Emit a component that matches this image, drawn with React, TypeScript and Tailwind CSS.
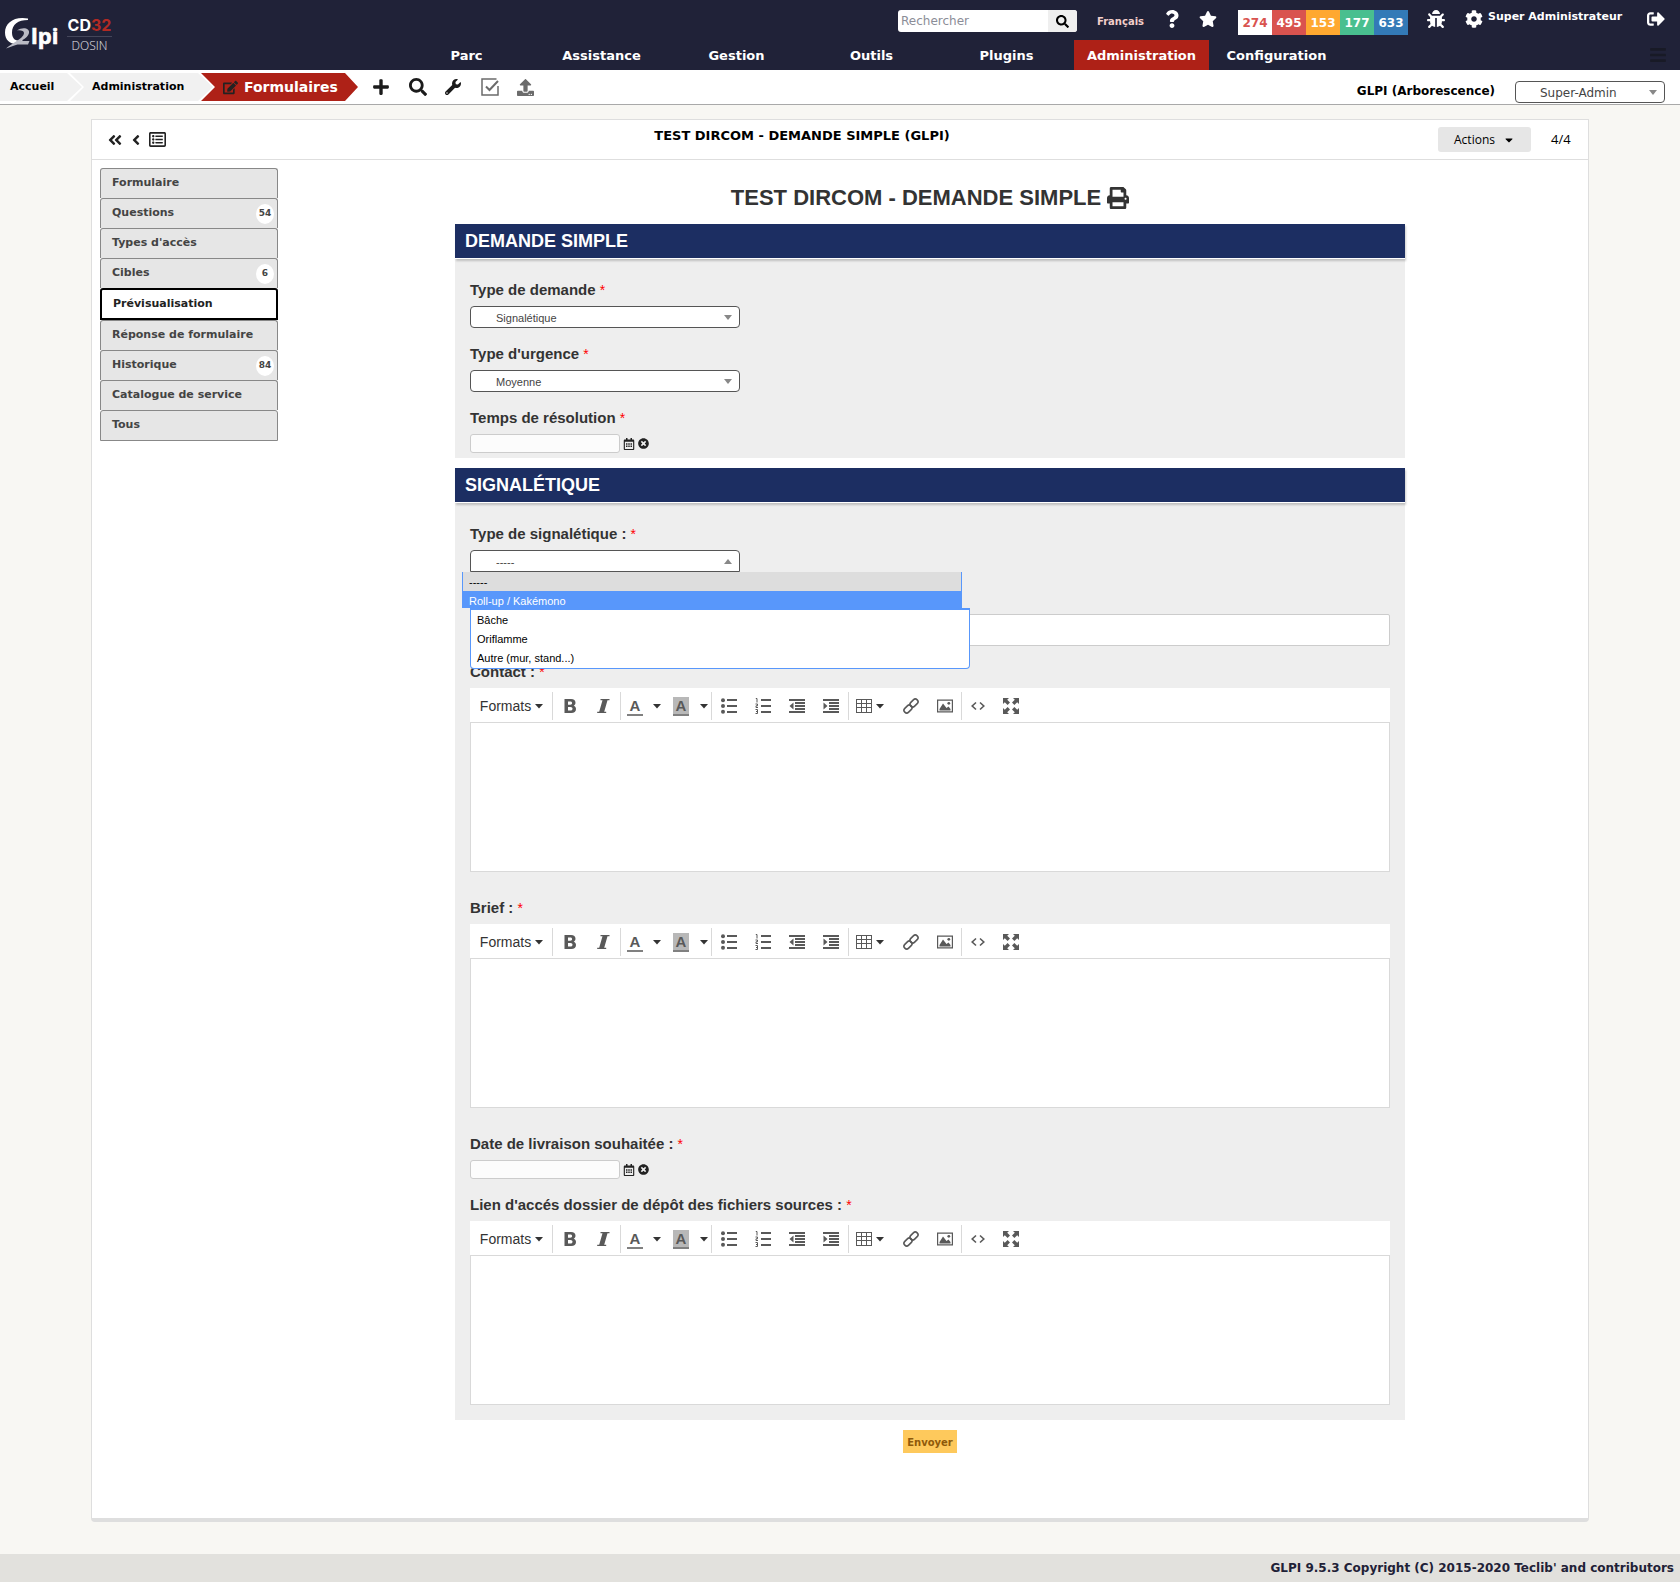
import React from "react";
import {
  FaAngleDoubleLeft,
  FaAngleLeft,
  FaBars,
  FaBug,
  FaCaretDown,
  FaCog,
  FaEdit,
  FaPlus,
  FaPrint,
  FaQuestion,
  FaRegCalendarAlt,
  FaRegListAlt,
  FaSearch,
  FaSignOutAlt,
  FaStar,
  FaTimesCircle,
  FaUpload,
  FaWrench,
} from "react-icons/fa";

const menu = ["Parc", "Assistance", "Gestion", "Outils", "Plugins", "Administration", "Configuration"];

const counters = [
  { value: 274, style: "bg-white text-[#d9534f]" },
  { value: 495, style: "bg-[#d9534f] text-white" },
  { value: 153, style: "bg-[#ffa830] text-white" },
  { value: 177, style: "bg-[#49bf8f] text-white" },
  { value: 633, style: "bg-[#337ab7] text-white" },
];

const tabs: { label: string; count?: number }[] = [
  { label: "Formulaire" },
  { label: "Questions", count: 54 },
  { label: "Types d'accès" },
  { label: "Cibles", count: 6 },
  { label: "Prévisualisation" },
  { label: "Réponse de formulaire" },
  { label: "Historique", count: 84 },
  { label: "Catalogue de service" },
  { label: "Tous" },
];

function Logo() {
  return (
    <a href="#" aria-label="Glpi CD32 DOSIN" className="flex w-[399px] shrink-0 items-start pt-[16px] pl-[4px] text-white">
      <svg width="56" height="36" viewBox="0 0 56 36" className="mr-[7px]">
        <path d="M24 2.500C10 0 1 7 1 16.500 1 24 6 28 12 28c3 0 5-.8 7-2.500l-1-1.500c-6 2-10-1-10-7.500C8 8.500 14 4 24 4z" fill="#fff" />
        <path d="M13 14.500c6-4 13-2 12 2.500-.7 3.500-5 6.500-8 8h8.500l-1.500 3.500H13.500C9 30 6 31 2 32.500c3-3 7-5 10-7 4-2.500 8-5.500 8-8.500 0-2-3-3-7-2.500z" fill="#b9bac4" />
        <text x="27" y="28" fill="#fff" stroke="#fff" strokeWidth="0.600" fontFamily="Open Sans, sans-serif" fontWeight="700" fontSize="22">
          lpi
        </text>
      </svg>
      <span className="flex w-[45px] flex-col items-center pt-px">
        <span className="font-['Inter'] text-[16px] leading-[16px] font-bold">
          CD<span className="text-[#b22a24]">32</span>
        </span>
        <span className="mt-[3px] h-px w-full bg-[#44465a]" />
        <span className="font-['Open_Sans'] text-[12px] leading-[18px] font-light text-[#e4e5ea]">DOSIN</span>
      </span>
    </a>
  );
}

function Header() {
  return (
    <header className="flex h-[70px] bg-[#202238] font-bold text-white">
      <Logo />
      <div className="flex min-w-0 flex-1 flex-col">
        <div className="flex h-10 items-start justify-end pr-[15px]">
          <form className="mt-[10px] flex h-[22px] w-[179px] overflow-hidden rounded-[3px] bg-white">
            <input
              type="text"
              aria-label="Rechercher"
              placeholder="Rechercher"
              className="min-w-0 flex-1 px-[3px] text-[12px] font-normal text-black placeholder:text-[#8b8d97]"
            />
            <button type="button" aria-label="Lancer la recherche" className="flex w-[29px] items-center justify-center bg-[#efefef] text-black">
              <FaSearch size={13} />
            </button>
          </form>
          <a href="#" className="mt-[14px] ml-[20px] w-[49px] text-[10px] leading-[15px] text-[#f3cfca]">
            Français
          </a>
          <a href="#" aria-label="Aide" className="mt-[10px] ml-[17px]">
            <FaQuestion size={18} />
          </a>
          <a href="#" aria-label="Favoris" className="mt-[10px] ml-[18px]">
            <FaStar size={18} />
          </a>
          <div className="mt-[10px] ml-[21px] flex h-[25px] text-[12px]">
            {counters.map((c) => (
              <a key={c.value} href="#" className={"flex w-[34px] items-center justify-center " + c.style}>
                {c.value}
              </a>
            ))}
          </div>
          <button type="button" aria-label="Débogage" className="mt-[10px] ml-[19px]">
            <FaBug size={18} />
          </button>
          <a href="#" className="ml-[20px] flex">
            <FaCog size={18} className="mt-[10px]" />
            <span className="mt-[10px] ml-[5px] w-[141px] text-[11px] leading-[14px] whitespace-nowrap">Super Administrateur</span>
          </a>
          <a href="#" aria-label="Déconnexion" className="mt-[10px] ml-[18px]">
            <FaSignOutAlt size={18} />
          </a>
        </div>
        <nav className="flex h-[30px] text-[13px]">
          {menu.map((m) => (
            <a
              key={m}
              href="#"
              className={"flex w-[135px] items-center justify-center pt-[2px] " + (m === "Administration" ? "bg-[#ae2117]" : "")}
            >
              {m}
            </a>
          ))}
          <button type="button" aria-label="Menu" className="mr-[13px] ml-auto text-[#181a26]">
            <FaBars size={18} />
          </button>
        </nav>
      </div>
    </header>
  );
}

function CheckSquare() {
  return (
    <svg width="18" height="18" viewBox="0 0 18 18" fill="none" stroke="#6b6b6b" strokeWidth="1.500">
      <path d="M15.500 1H1v16h16V8" />
      <path d="M5 8.500 8.500 12 17 3" strokeWidth="2" />
    </svg>
  );
}

function BreadcrumbBar() {
  return (
    <div className="flex h-[35px] items-center border-b border-[#a9a9a9] bg-white text-black">
      <nav aria-label="Fil d'Ariane" className="flex h-[28px] text-[11px] font-bold">
        <a href="#" className="flex w-[82px] items-center bg-[#f1f1f1] pl-[10px] [clip-path:polygon(0_0,67px_0,100%_50%,67px_100%,0_100%)]">
          Accueil
        </a>
        <a
          href="#"
          className="-ml-[12px] flex w-[143px] items-center bg-[#f1f1f1] pl-[22px] [clip-path:polygon(0_0,128px_0,100%_50%,128px_100%,0_100%,14px_50%)]"
        >
          Administration
        </a>
        <a
          href="#"
          className="-ml-[12px] flex w-[157px] items-center bg-[#ae2117] pl-[22px] text-[14px] text-white [clip-path:polygon(0_0,144px_0,100%_50%,144px_100%,0_100%,14px_50%)]"
        >
          <FaEdit size={15} className="mr-[6px] text-[#222]" />
          Formulaires
        </a>
      </nav>
      <div className="flex items-center text-[#1b1b1b]">
        <button type="button" aria-label="Ajouter" className="ml-[14px]">
          <FaPlus size={18} />
        </button>
        <button type="button" aria-label="Rechercher" className="ml-[19px]">
          <FaSearch size={18} />
        </button>
        <button type="button" aria-label="Configurer" className="ml-[18px]">
          <FaWrench size={16} />
        </button>
        <button type="button" aria-label="Sélection" className="ml-[20px]">
          <CheckSquare />
        </button>
        <button type="button" aria-label="Importer" className="ml-[18px] text-[#6b6b6b]">
          <FaUpload size={17} />
        </button>
      </div>
      <a href="#" className="mt-[8px] mr-[20px] ml-auto text-[12px] font-bold">
        GLPI (Arborescence)
      </a>
      <div className="relative mt-[9px] mr-[15px] h-[22px] w-[150px]">
        <select
          aria-label="Profil"
          className="block h-full w-full appearance-none rounded-[4px] border border-[#555] bg-white pt-[2px] pl-[24px] text-[12px] leading-[18px] text-[#444]"
        >
          <option>Super-Admin</option>
        </select>
        <Caret />
      </div>
    </div>
  );
}

function Caret({ up = false }: { up?: boolean }) {
  return (
    <svg width="8" height="5" viewBox="0 0 8 5" fill="#888" className="pointer-events-none absolute top-[9px] right-[8px]">
      <path d={up ? "M0 5h8L4 0z" : "M0 0h8L4 5z"} />
    </svg>
  );
}

function Sidebar() {
  return (
    <ul className="mt-[8px] ml-[8px] w-[178px] shrink-0 text-[11px] font-bold">
      {tabs.map((t, i) => {
        const active = t.label === "Prévisualisation";
        const last = i === tabs.length - 1;
        return (
          <li key={t.label}>
            <a
              href="#"
              className={
                "flex rounded-t-[3px] pt-[5px] pl-[11px] leading-[17px] " +
                (active
                  ? "h-[32px] border-2 border-black bg-white text-[#222]"
                  : "border border-[#888] bg-[#e6e6e6] text-[#444] " + (last ? "h-[31px]" : "h-[30px] border-b-0"))
              }
            >
              {t.label}
              {t.count !== undefined && (
                <span className="mr-[3px] ml-auto flex h-[20px] w-[18px] items-center justify-center rounded-[50%] bg-white pb-[2px] text-[9px]">
                  {t.count}
                </span>
              )}
            </a>
          </li>
        );
      })}
    </ul>
  );
}

function Question({
  label,
  htmlFor,
  className = "mb-4",
  children,
}: {
  label?: string;
  htmlFor: string;
  className?: string;
  children: React.ReactNode;
}) {
  return (
    <div className={className}>
      <label htmlFor={htmlFor} className="mb-[6px] block h-[20px] text-[15px] leading-[20px] font-bold text-[#333]">
        {label && (
          <>
            {label} <span className="text-[14px] font-normal text-[#f00]">*</span>
          </>
        )}
      </label>
      {children}
    </div>
  );
}

function Dropdown({ id, value, open = false }: { id: string; value: string; open?: boolean }) {
  return (
    <div className="relative h-[22px] w-[270px]">
      <select
        id={id}
        className={
          "block h-full w-full appearance-none border border-[#555] bg-white pt-[2px] pl-[25px] text-[11px] leading-[18px] text-[#444] " +
          (open ? "rounded-t-[4px]" : "rounded-[4px]")
        }
      >
        <option>{value}</option>
      </select>
      <Caret up={open} />
      {open && (
        <ul
          role="listbox"
          aria-label="Type de signalétique"
          className="absolute top-full -left-[8px] z-10 w-[508px] text-[11px] leading-[19px] text-black"
        >
          <li role="option" className="mr-[8px] h-[19px] border-x border-[#5897fb] bg-[#ddd] pt-px pl-[6px]">
            -----
          </li>
          <li role="option" aria-selected="true" className="mr-[8px] h-[17px] bg-[#5897fb] pt-px pl-[7px] text-white">
            Roll-up / Kakémono
          </li>
          <li role="presentation" className="ml-[8px]">
            <ul role="group" className="rounded-b-[4px] border border-t-2 border-[#5897fb] bg-white pt-px">
              <li role="option" className="pl-[6px]">
                Bâche
              </li>
              <li role="option" className="pl-[6px]">
                Oriflamme
              </li>
              <li role="option" className="pl-[6px]">
                Autre (mur, stand...)
              </li>
            </ul>
          </li>
        </ul>
      )}
    </div>
  );
}

function DateField({ id }: { id: string }) {
  return (
    <div className="flex h-[19px] items-center text-[#222]">
      <input id={id} type="text" className="h-full w-[150px] rounded-[3px] border border-[#ccc] bg-[#fcfcfc] px-1 text-[11px]" />
      <button type="button" aria-label="Choisir une date" className="ml-[3px]">
        <FaRegCalendarAlt size={12} />
      </button>
      <button type="button" aria-label="Effacer la date" className="ml-[3px]">
        <FaTimesCircle size={11} />
      </button>
    </div>
  );
}

function SmallCaret() {
  return (
    <svg width="8" height="5" viewBox="0 0 8 5" fill="#333">
      <path d="M0 0h8L4 4.500z" />
    </svg>
  );
}

function Glyph({ children }: { children: React.ReactNode }) {
  return (
    <svg width="16" height="16" viewBox="0 0 16 16" fill="#595959">
      {children}
    </svg>
  );
}

const tool = "flex h-[28px] w-[34px] items-center justify-center";
const separator = "h-[28px] w-px bg-[#d9d9d9]";

function Toolbar() {
  return (
    <div className="flex h-[34px] items-center overflow-hidden bg-white pt-[2px] text-[#595959]">
      <button type="button" className="flex w-[82px] items-center justify-center gap-[4px] pl-px text-[14px] text-[#333]">
        Formats <SmallCaret />
      </button>
      <span className={separator} />
      <button type="button" aria-label="Gras" className="flex h-[28px] w-[33px] items-center justify-center">
        <Glyph>
          <path
            fillRule="evenodd"
            d="M2.500 1H9c3 0 4.500 1.500 4.500 3.800 0 1.400-.7 2.400-1.800 2.900 1.500.5 2.300 1.700 2.300 3.300C14 13.600 12.200 15 9.300 15H2.500zM6 3.400v3.400h2.200c1.300 0 1.900-.6 1.900-1.700s-.6-1.700-1.900-1.700zM6 9v3.600h2.500c1.300 0 2-.7 2-1.800S9.800 9 8.500 9z"
          />
        </Glyph>
      </button>
      <button type="button" aria-label="Italique" className={tool}>
        <Glyph>
          <path d="M5.500 1h9v1.200h-2L9.200 13.800h2V15h-9v-1.200h2L7.500 2.200h-2z" />
        </Glyph>
      </button>
      <span className={separator} />
      <button type="button" aria-label="Couleur du texte" className="flex h-[28px] w-[48px] items-center pt-px pl-[6px]">
        <span className="w-[16px] border-b-2 border-[#808080] pt-px text-center text-[15px] leading-[16px] font-bold">A</span>
        <span className="ml-[10px] pb-px">
          <SmallCaret />
        </span>
      </button>
      <button type="button" aria-label="Couleur de fond" className="flex h-[28px] w-[42px] items-center pt-px pl-[4px]">
        <span className="w-[16px] border-b-2 border-[#808080] bg-[#b8b8b8] pt-px text-center text-[15px] leading-[16px] font-bold">A</span>
        <span className="ml-[11px] pb-px">
          <SmallCaret />
        </span>
      </button>
      <span className={separator} />
      <button type="button" aria-label="Liste à puces" className={tool}>
        <Glyph>
          <circle cx="2" cy="2.200" r="2" />
          <circle cx="2" cy="8" r="2" />
          <circle cx="2" cy="13.800" r="2" />
          <path d="M6 1h10v2H6zM6 7h10v2H6zM6 13h10v2H6z" />
        </Glyph>
      </button>
      <button type="button" aria-label="Liste numérotée" className={tool}>
        <Glyph>
          <path d="M6 1h10v2H6zM6 7h10v2H6zM6 13h10v2H6z" />
          <path d="M.8 .5h1.200v4M.5 6h2v1.800H1v1.700h2M.5 11.500h2v4h-2M1 13.500h1.500" fill="none" stroke="#595959" />
        </Glyph>
      </button>
      <button type="button" aria-label="Diminuer le retrait" className={tool}>
        <Glyph>
          <path d="M0 1h16v2H0zM6 4h10v2H6zM6 7h10v2H6zM6 10h10v2H6zM0 13h16v2H0zM4.500 4.500v7L.5 8z" />
        </Glyph>
      </button>
      <button type="button" aria-label="Augmenter le retrait" className={tool}>
        <Glyph>
          <path d="M0 1h16v2H0zM6 4h10v2H6zM6 7h10v2H6zM6 10h10v2H6zM0 13h16v2H0zM.5 4.500v7L4.500 8z" />
        </Glyph>
      </button>
      <span className={separator} />
      <button type="button" aria-label="Tableau" className="flex h-[28px] w-[45px] items-center gap-[4px] pl-[7px]">
        <Glyph>
          <path
            fillRule="evenodd"
            d="M0 1h16v14H0zM1 2v3h4V2zM6 2v3h4V2zM11 2v3h4V2zM1 6v3h4V6zM6 6v3h4V6zM11 6v3h4V6zM1 10v4h4v-4zM6 10v4h4v-4zM11 10v4h4v-4z"
          />
        </Glyph>
        <SmallCaret />
      </button>
      <button type="button" aria-label="Lien" className={tool}>
        <Glyph>
          <g fill="none" stroke="#595959" strokeWidth="1.600">
            <rect x="-4.500" y="-2.700" width="9" height="5.400" rx="2.700" transform="translate(11 5) rotate(-45)" />
            <rect x="-4.500" y="-2.700" width="9" height="5.400" rx="2.700" transform="translate(5 11) rotate(-45)" />
          </g>
        </Glyph>
      </button>
      <button type="button" aria-label="Image" className="flex h-[28px] w-[33px] items-center justify-center">
        <Glyph>
          <path fillRule="evenodd" d="M0 1.500h16v13H0zM1.200 2.700v10.600h13.600V2.700z" />
          <path d="M2.500 12.500V11L6 5.500 9.500 10l2-1.500 2 2.500v1.500z" />
          <circle cx="11.800" cy="5.300" r="1.400" />
        </Glyph>
      </button>
      <span className={separator} />
      <button type="button" aria-label="Code source" className="flex h-[28px] w-[32px] items-center justify-center">
        <Glyph>
          <path d="M6 4.500 2.200 8 6 11.500M10 4.500 13.800 8 10 11.500" fill="none" stroke="#595959" strokeWidth="1.600" />
        </Glyph>
      </button>
      <button type="button" aria-label="Plein écran" className={tool}>
        <Glyph>
          <path d="M0 0h6L4.200 1.800 7 4.600 4.600 7 1.800 4.200 0 6zM16 0v6l-1.800-1.800L11.400 7 9 4.600l2.800-2.800L10 0zM0 16v-6l1.800 1.800L4.600 9 7 11.400l-2.800 2.800L6 16zM16 16h-6l1.800-1.800L9 11.400 11.400 9l2.800 2.800L16 10z" />
        </Glyph>
      </button>
    </div>
  );
}

function Editor({ id }: { id: string }) {
  return (
    <div>
      <Toolbar />
      <textarea id={id} className="block h-[150px] w-full resize-none border border-[#d9d9d9] bg-white p-2 text-[14px]" />
    </div>
  );
}

function Section({ title, className, children }: { title: string; className: string; children: React.ReactNode }) {
  return (
    <section className={"bg-[#eee] " + className}>
      <h2 className="h-[35px] border-b border-white bg-[#1c2e62] pl-[10px] text-[18px] leading-[35px] font-bold text-white shadow-[1px_2px_2px_rgba(0,0,0,0.2)]">
        {title}
      </h2>
      <div className="px-[15px] pt-[21px]">{children}</div>
    </section>
  );
}

function Preview() {
  return (
    <form className="mt-[24px] ml-[177px] w-full max-w-[950px] font-['Liberation_Sans',Arial,sans-serif]">
      <h1 className="mb-[12px] flex items-center justify-center gap-[6px] text-[22px] leading-[28px] font-bold text-[#333]">
        TEST DIRCOM - DEMANDE SIMPLE
        <FaPrint size={22} />
      </h1>
      <Section title="DEMANDE SIMPLE" className="mb-[10px] pb-[5px]">
        <Question label="Type de demande" htmlFor="type-demande">
          <Dropdown id="type-demande" value="Signalétique" />
        </Question>
        <Question label="Type d'urgence" htmlFor="type-urgence">
          <Dropdown id="type-urgence" value="Moyenne" />
        </Question>
        <Question label="Temps de résolution" htmlFor="temps" className="mb-0">
          <DateField id="temps" />
        </Question>
      </Section>
      <Section title="SIGNALÉTIQUE" className="pb-[15px]">
        <Question label="Type de signalétique :" htmlFor="type-signaletique">
          <Dropdown id="type-signaletique" value="-----" open />
        </Question>
        <Question htmlFor="precision">
          <input
            id="precision"
            type="text"
            aria-label="Précision"
            className="block h-[32px] w-full rounded-[2px] border border-[#ccc] bg-white px-2 text-[14px]"
          />
        </Question>
        <Question label="Contact :" htmlFor="contact" className="mb-[26px]">
          <Editor id="contact" />
        </Question>
        <Question label="Brief :" htmlFor="brief" className="mb-[26px]">
          <Editor id="brief" />
        </Question>
        <Question label="Date de livraison souhaitée :" htmlFor="livraison">
          <DateField id="livraison" />
        </Question>
        <Question label="Lien d'accés dossier de dépôt des fichiers sources :" htmlFor="sources" className="mb-0">
          <Editor id="sources" />
        </Question>
      </Section>
      <div className="mt-[10px] mb-[65px] flex justify-center">
        <button type="button" className="h-[23px] bg-[#fec95c] px-[4px] pt-px font-['DejaVu_Sans',Verdana,sans-serif] text-[10px] font-bold text-[#8f5a0a]">
          Envoyer
        </button>
      </div>
    </form>
  );
}

export default function App() {
  return (
    <div className="flex min-h-screen flex-col bg-[#f8f7f3] font-['DejaVu_Sans',Verdana,sans-serif]">
      <Header />
      <BreadcrumbBar />
      <main className="mx-[91px] mt-[14px] mb-[32px] rounded-b-[4px] border border-b-4 border-[#dedede] bg-white">
        <div className="flex h-[40px] items-center border-b border-[#dedede] px-[15px] text-[#222]">
          <button type="button" aria-label="Premier">
            <FaAngleDoubleLeft size={16} />
          </button>
          <button type="button" aria-label="Précédent" className="ml-[5px]">
            <FaAngleLeft size={16} />
          </button>
          <button type="button" aria-label="Liste" className="ml-[5px]">
            <FaRegListAlt size={17} />
          </button>
          <span className="mb-[8px] flex-1 text-center text-[13px] font-bold text-black">TEST DIRCOM - DEMANDE SIMPLE (GLPI)</span>
          <button
            type="button"
            className="flex h-[25px] w-[93px] items-center justify-center gap-[8px] rounded-[3px] bg-[#e6e6e6] pt-px font-['Open_Sans',sans-serif] text-[12px] text-black"
          >
            Actions <FaCaretDown size={12} />
          </button>
          <span className="ml-[20px] w-[22px] font-['Open_Sans',sans-serif] text-[13px] text-black">4/4</span>
        </div>
        <div className="flex">
          <Sidebar />
          <Preview />
        </div>
      </main>
      <footer className="mt-auto flex h-[28px] items-center justify-end bg-[#e2e1dd] pr-[6px] text-[12px] font-bold text-[#1f2137]">
        GLPI 9.5.3 Copyright (C) 2015-2020 Teclib' and contributors
      </footer>
    </div>
  );
}
